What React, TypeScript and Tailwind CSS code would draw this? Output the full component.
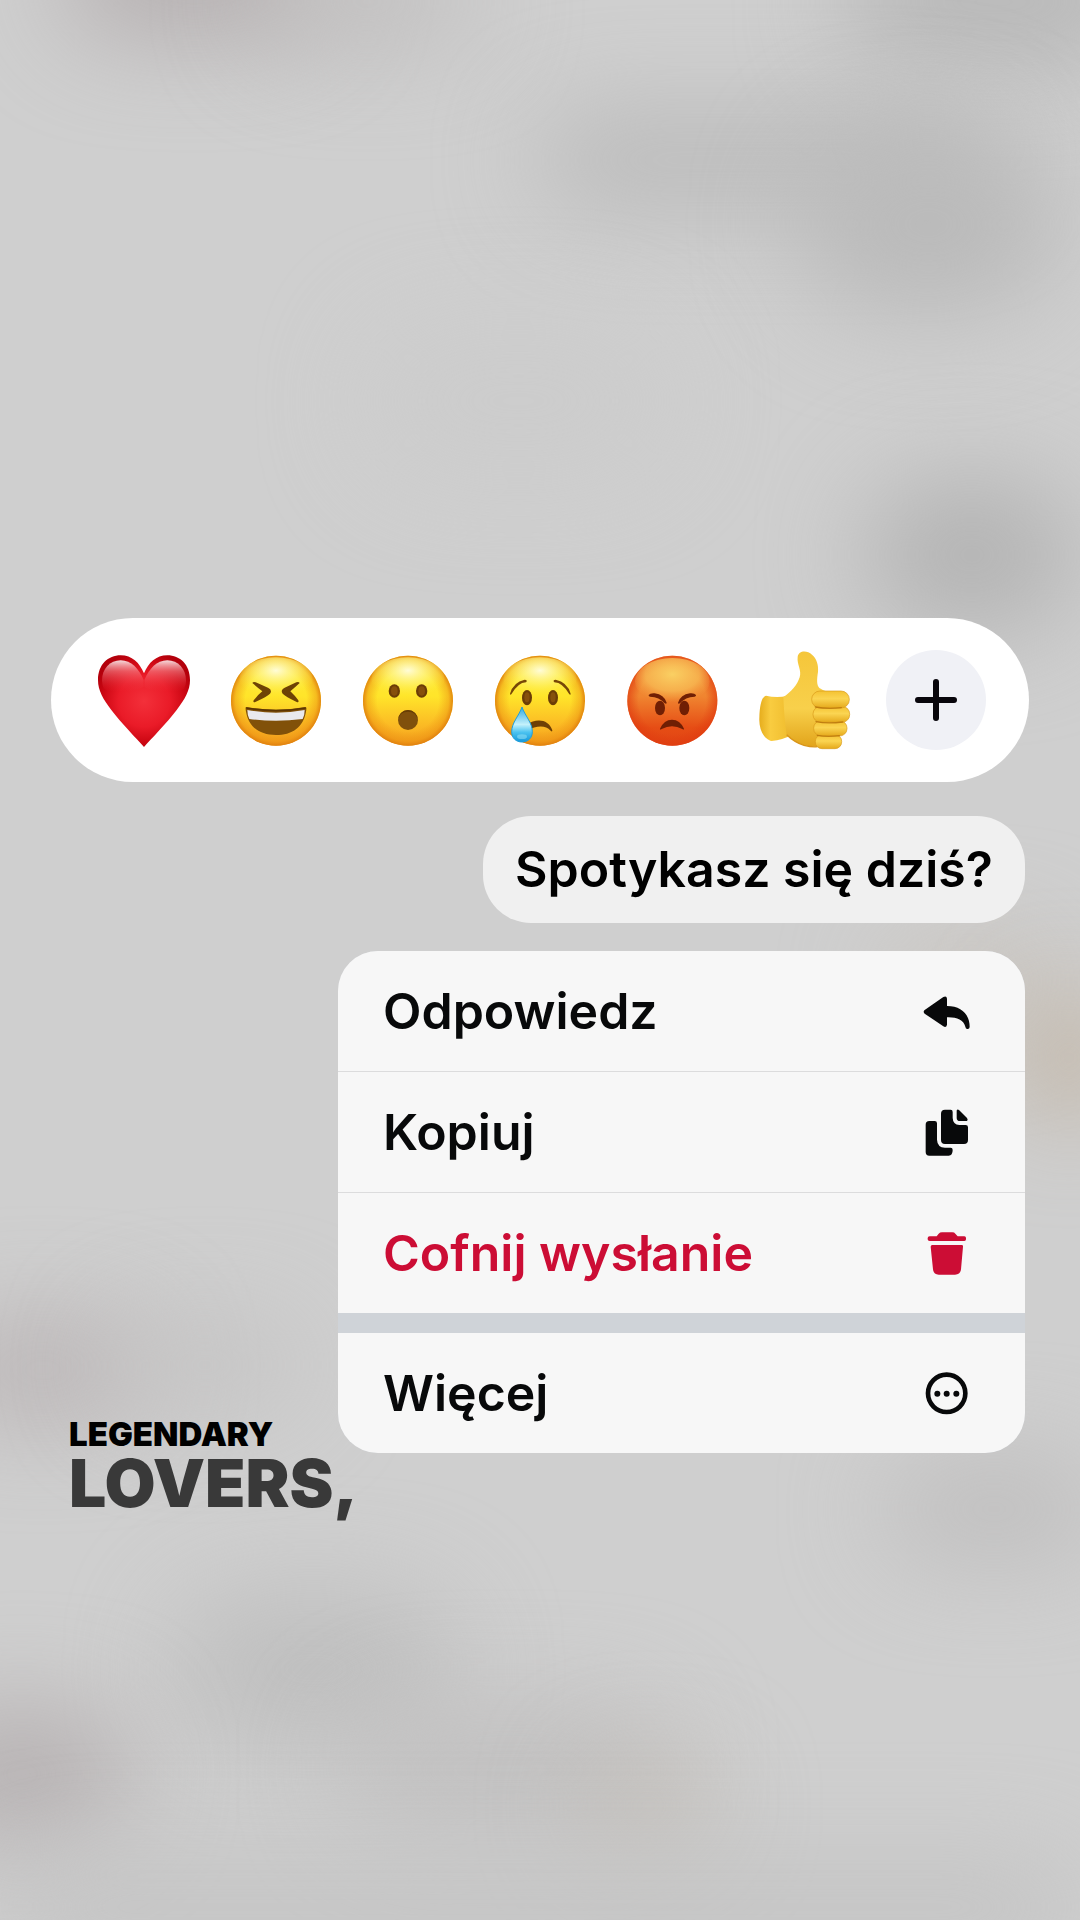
import { ReactNode } from 'react'

const BLOBS = [
  'left-[6%] -top-[4%] h-[110px] w-[24%] bg-[#b3adae]',
  'left-[24%] -top-[2%] h-[80px] w-[20%] bg-[#c0bebe]',
  '-right-[6%] -top-[3%] h-[120px] w-[28%] bg-[#b6b6b6]',
  'left-[50%] top-[6%] h-[90px] w-[42%] bg-[#b9b9b9]',
  'left-[74%] top-[7%] h-[180px] w-[24%] bg-[#bababa]',
  'left-[34%] top-[17%] h-[150px] w-[28%] bg-[#cccccc]',
  'left-[80%] top-[25%] h-[150px] w-[20%] bg-[#b3b3b3]',
  'left-[82%] top-[49%] h-[80px] w-[16%] bg-[#c9c4be]',
  'left-[95%] top-[52%] h-[120px] w-[8%] bg-[#bfb09d]',
  '-left-[6%] top-[69%] h-[90px] w-[20%] bg-[#b9b3b4]',
  'left-[10%] top-[69%] h-[80px] w-[18%] bg-[#c4c3c3]',
  'left-[82%] top-[76%] h-[100px] w-[20%] bg-[#bfbebe]',
  'left-[16%] top-[83%] h-[150px] w-[26%] bg-[#bfbfbf]',
  'left-[32%] top-[89%] h-[120px] w-[30%] bg-[#c1c0c0]',
  '-left-[8%] top-[89%] h-[130px] w-[20%] bg-[#b6b1b2]',
  'left-[54%] top-[92%] h-[80px] w-[12%] bg-[#c3beb8]',
  'left-0 top-[97%] h-[90px] w-full bg-[#c3c3c3]',
]

function Backdrop() {
  return (
    <div className="absolute inset-0 overflow-hidden bg-[#cfcfcf]" aria-hidden="true">
      {BLOBS.map((blob) => (
        <div key={blob} className={`absolute rounded-full blur-[50px] ${blob}`} />
      ))}
    </div>
  )
}

function Face({ id, children }: { id: string; children: ReactNode }) {
  return (
    <svg viewBox="0 0 300 300" className="size-full">
      <defs>
        <linearGradient id={`${id}-base`} x1="0" y1="0" x2="0" y2="1">
          <stop offset="0" stopColor="#fde53c" />
          <stop offset="0.45" stopColor="#ffe52a" />
          <stop offset="0.78" stopColor="#fbb924" />
          <stop offset="1" stopColor="#f3a01d" />
        </linearGradient>
        <radialGradient id={`${id}-edge`} cx="0.5" cy="0.5" r="0.5">
          <stop offset="0.68" stopColor="#ea8a10" stopOpacity="0" />
          <stop offset="0.9" stopColor="#ea8a10" stopOpacity="0.45" />
          <stop offset="1" stopColor="#de7d0d" stopOpacity="0.9" />
        </radialGradient>
        <radialGradient id={`${id}-shine`} cx="0.5" cy="0.3" r="0.6">
          <stop offset="0" stopColor="#fffde0" stopOpacity="0.95" />
          <stop offset="0.5" stopColor="#fff98a" stopOpacity="0.55" />
          <stop offset="1" stopColor="#fff23c" stopOpacity="0" />
        </radialGradient>
      </defs>
      <circle cx="150" cy="152" r="135" fill={`url(#${id}-base)`} />
      <circle cx="150" cy="152" r="135" fill={`url(#${id}-edge)`} />
      <ellipse cx="150" cy="88" rx="110" ry="66" fill={`url(#${id}-shine)`} />
      {children}
    </svg>
  )
}

function Heart() {
  return (
    <svg viewBox="0 0 300 300" className="size-full">
      <defs>
        <radialGradient id="heart-fill" cx="0.5" cy="0.5" r="0.56">
          <stop offset="0" stopColor="#f3303a" />
          <stop offset="0.5" stopColor="#ea1b28" />
          <stop offset="0.8" stopColor="#cc0713" />
          <stop offset="1" stopColor="#b3000b" />
        </radialGradient>
        <linearGradient id="heart-shine" x1="0" y1="0" x2="0" y2="1">
          <stop offset="0" stopColor="#fff" stopOpacity="0.85" />
          <stop offset="0.35" stopColor="#ff9ea3" stopOpacity="0.5" />
          <stop offset="1" stopColor="#f0303a" stopOpacity="0" />
        </linearGradient>
      </defs>
      <path
        d="M150 291C128 266 82 220 52 180C28 148 12 122 12 90C12 44 42 16 80 16C114 16 136 38 150 70C164 38 186 16 220 16C258 16 288 44 288 90C288 122 272 148 248 180C218 220 172 266 150 291Z"
        fill="url(#heart-fill)"
      />
      <path
        d="M24 92C24 56 48 31 80 31C112 31 134 56 149 90L149 110C120 130 48 130 30 116Q24 104 24 92Z"
        fill="url(#heart-shine)"
      />
      <path
        d="M276 92C276 56 252 31 220 31C188 31 166 56 151 90L151 110C180 130 252 130 270 116Q276 104 276 92Z"
        fill="url(#heart-shine)"
      />
    </svg>
  )
}

function Laugh() {
  return (
    <Face id="laugh">
      <path d="M79 99Q82 94 89 97L126 113Q140 120 132 131Q124 139 88 156Q80 159 83 151Q94 136 109 124Q94 112 79 99Z" fill="#6e4305" />
      <path d="M221 99Q218 94 211 97L176 113Q162 120 170 131Q178 139 212 156Q220 159 217 151Q206 136 193 124Q207 112 221 99Z" fill="#6e4305" />
      <path d="M61 171Q150 187 239 171Q243 171 240 185C232 232 198 255 150 255C102 255 68 232 60 185Q57 170 61 171Z" fill="#815109" />
      <path d="M64 180Q150 196 236 180Q236 196 230 207Q150 218 70 207Q64 196 64 180Z" fill="#e9e9ed" />
      <path d="M61 174Q150 190 239 174" fill="none" stroke="#5c3503" strokeWidth="5" />
    </Face>
  )
}

function Wow() {
  return (
    <Face id="wow">
      <ellipse cx="109" cy="123" rx="17" ry="20" fill="#6b3d06" />
      <ellipse cx="109" cy="123" rx="10" ry="14" fill="#86500c" />
      <ellipse cx="191" cy="123" rx="17" ry="20" fill="#6b3d06" />
      <ellipse cx="191" cy="123" rx="10" ry="14" fill="#86500c" />
      <circle cx="150" cy="210" r="30" fill="#80500c" />
      <path d="M120 210A30 30 0 0 1 180 210Q175 185 150 185Q125 185 120 210Z" fill="#663d05" />
    </Face>
  )
}

function Cry() {
  return (
    <Face id="cry">
      <defs>
        <linearGradient id="tear" x1="0" y1="0" x2="0" y2="1">
          <stop offset="0" stopColor="#2fa9e2" />
          <stop offset="0.5" stopColor="#c4f1fb" />
          <stop offset="0.72" stopColor="#4cc3f0" />
          <stop offset="1" stopColor="#1397da" />
        </linearGradient>
      </defs>
      <path d="M60 131Q70 96 104 89Q114 90 108 97Q84 98 64 133Q60 136 60 131Z" fill="#774707" />
      <path d="M242 131Q232 96 197 89Q187 90 193 97Q218 98 238 133Q242 136 242 131Z" fill="#774707" />
      <ellipse cx="111" cy="143" rx="15" ry="23" fill="#6b3d06" />
      <ellipse cx="111" cy="142" rx="8" ry="15" fill="#86500c" />
      <ellipse cx="189" cy="143" rx="15" ry="23" fill="#6b3d06" />
      <ellipse cx="189" cy="142" rx="8" ry="15" fill="#86500c" />
      <path d="M110 224C140 204 176 208 187 241Q187 247 182 242C166 224 140 226 110 242Z" fill="#6e3f05" />
      <path d="M96 171C104 196 127 218 127 245C127 264 114 276 96 276C78 276 65 264 65 245C65 218 88 196 96 171Z" fill="url(#tear)" stroke="#1f9edb" strokeWidth="3" />
      <ellipse cx="96" cy="260" rx="15" ry="7" fill="#9be5f8" opacity="0.5" />
    </Face>
  )
}

function Angry() {
  return (
    <svg viewBox="0 0 300 300" className="size-full">
      <defs>
        <linearGradient id="angry-base" x1="0" y1="0" x2="0" y2="1">
          <stop offset="0" stopColor="#f28a35" />
          <stop offset="0.45" stopColor="#f08530" />
          <stop offset="0.8" stopColor="#e64d15" />
          <stop offset="1" stopColor="#e04313" />
        </linearGradient>
        <radialGradient id="angry-edge" cx="0.5" cy="0.5" r="0.5">
          <stop offset="0.75" stopColor="#e03c10" stopOpacity="0" />
          <stop offset="1" stopColor="#e03c10" stopOpacity="0.7" />
        </radialGradient>
        <radialGradient id="angry-shine" cx="0.5" cy="0.35" r="0.6">
          <stop offset="0" stopColor="#fad063" />
          <stop offset="0.6" stopColor="#f8bd55" stopOpacity="0.75" />
          <stop offset="1" stopColor="#f6a444" stopOpacity="0" />
        </radialGradient>
      </defs>
      <circle cx="151" cy="152" r="135" fill="url(#angry-base)" />
      <circle cx="151" cy="152" r="135" fill="url(#angry-edge)" />
      <ellipse cx="151" cy="94" rx="112" ry="70" fill="url(#angry-shine)" />
      <ellipse cx="114" cy="174" rx="15" ry="22" fill="#701f04" />
      <ellipse cx="187" cy="174" rx="15" ry="22" fill="#701f04" />
      <path d="M80 135Q84 129 98 130Q126 134 134 158Q134 163 128 160Q112 141 84 140Q79 139 80 135Z" fill="#701f04" />
      <path d="M222 135Q218 129 204 130Q176 134 168 158Q168 163 174 160Q190 141 218 140Q223 139 222 135Z" fill="#701f04" />
      <path d="M114 236Q126 209 150 209Q174 209 186 236Q186 241 181 237Q150 220 119 237Q113 241 114 236Z" fill="#701f04" />
    </svg>
  )
}

function ThumbsUp() {
  return (
    <svg viewBox="0 0 300 300" className="size-full">
      <defs>
        <linearGradient id="thumb-hand" x1="0" y1="0" x2="0" y2="1">
          <stop offset="0" stopColor="#f5c63a" />
          <stop offset="0.6" stopColor="#f8d04b" />
          <stop offset="1" stopColor="#e2a41b" />
        </linearGradient>
        <linearGradient id="thumb-finger" x1="0" y1="0" x2="0" y2="1">
          <stop offset="0" stopColor="#f4c232" />
          <stop offset="0.45" stopColor="#fbd552" />
          <stop offset="1" stopColor="#e5a91c" />
        </linearGradient>
        <linearGradient id="thumb-wrist" x1="0" y1="0" x2="1" y2="0">
          <stop offset="0" stopColor="#e6ad1d" />
          <stop offset="0.35" stopColor="#f9cc40" />
          <stop offset="1" stopColor="#efbb2c" />
        </linearGradient>
      </defs>
      <path d="M36 137Q66 144 100 138L112 256Q86 270 53 273C34 270 14 244 16 204C17 166 23 140 36 137Z" fill="url(#thumb-wrist)" />
      <path
        d="M88 141C110 128 130 105 137 82C144 60 128 44 131 20C134 0 160 0 174 14C188 26 194 44 192 66C188 90 188 106 196 114Q208 122 222 126L220 278C206 292 176 293 150 286C126 278 110 266 98 254C92 220 90 180 88 141Z"
        fill="url(#thumb-hand)"
      />
      <path d="M98 254C110 266 126 278 150 286Q174 292 190 290" fill="none" stroke="#d8951a" strokeWidth="4" />
      <g fill="url(#thumb-finger)" stroke="#d99a19" strokeWidth="2">
        <rect x="184" y="254" width="79" height="42" rx="20" />
        <rect x="179" y="212" width="100" height="46" rx="22" />
        <rect x="177" y="169" width="110" height="48" rx="23" />
        <rect x="173" y="123" width="113" height="51" rx="25" />
      </g>
      <g fill="none" stroke="#b8740c" strokeWidth="4" strokeLinecap="round" opacity="0.8">
        <path d="M184 171Q220 178 262 173" />
        <path d="M186 215Q220 222 266 216" />
        <path d="M190 256Q220 262 256 257" />
      </g>
    </svg>
  )
}

function PlusIcon() {
  return (
    <svg viewBox="0 0 42 42" className="size-[42px]" stroke="#08060b" strokeWidth="6" strokeLinecap="round">
      <path d="M21 3V39M3 21H39" />
    </svg>
  )
}

function ReplyIcon() {
  return (
    <svg viewBox="0 0 144 144" className="size-12" fill="currentColor">
      <path d="M8 69L64 30Q74 25 75 35V57C118 57 143 82 143 120Q142 127 136 126Q131 126 130 119C124 98 104 90 75 91V113Q73 123 64 118L8 80Q2 74 8 69Z" />
    </svg>
  )
}

function CopyIcon() {
  return (
    <svg viewBox="0 0 144 144" className="size-12" fill="currentColor">
      <path d="M69 5H86Q92 5 92 12V30Q93 50 112 51H131Q138 51 138 58V96Q138 108 126 108H69Q57 108 57 96V17Q57 5 69 5Z" />
      <path d="M104 8Q106 2 111 6L135 30Q139 36 135 39H114Q104 39 104 29Z" />
      <path d="M22 39H38Q45 39 45 46V95Q46 118 69 119H86Q92 119 92 126Q92 143 80 143H22Q11 143 11 132V50Q11 39 22 39Z" />
    </svg>
  )
}

function TrashIcon() {
  return (
    <svg viewBox="0 0 144 144" className="size-12" fill="currentColor">
      <path d="M23 22H44L50 14Q54 10 60 10H91Q97 10 100 14L107 22H127Q132 22 132 27V31Q132 36 127 36H23Q17 36 17 31V27Q17 22 23 22Z" />
      <path d="M31 48H119Q124 48 123 53L117 121Q115 137 99 137H50Q35 137 33 121L26 53Q26 48 31 48Z" />
    </svg>
  )
}

function MoreIcon() {
  return (
    <svg viewBox="0 0 144 144" className="size-12" fill="currentColor">
      <circle cx="74" cy="73" r="56" fill="none" stroke="currentColor" strokeWidth="14" />
      <circle cx="46" cy="74" r="9" />
      <circle cx="74" cy="74" r="9" />
      <circle cx="103" cy="74" r="9" />
    </svg>
  )
}

const REACTIONS = [
  { label: 'Serce', icon: <Heart /> },
  { label: 'Śmiech', icon: <Laugh /> },
  { label: 'Zaskoczenie', icon: <Wow /> },
  { label: 'Smutek', icon: <Cry /> },
  { label: 'Złość', icon: <Angry /> },
  { label: 'Kciuk w górę', icon: <ThumbsUp /> },
]

function MenuItem({ label, icon, danger }: { label: string; icon: ReactNode; danger?: boolean }) {
  return (
    <button
      type="button"
      className={`flex h-[120px] w-full items-center justify-between bg-[#f7f7f7] pr-[55px] pl-[45px] text-left text-[50px] leading-[59px] font-semibold ${
        danger ? 'text-[#cc0d35]' : 'text-[#08090a]'
      }`}
    >
      <span>{label}</span>
      {icon}
    </button>
  )
}

export default function App() {
  return (
    <main className="relative min-h-screen font-['Inter','Liberation_Sans',sans-serif]">
      <Backdrop />

      <div className="relative flex flex-col pt-[618px]">
        <section className="mx-[51px] flex h-[164px] items-center justify-between rounded-full bg-white px-[43px]">
          {REACTIONS.map(({ label, icon }) => (
            <button key={label} type="button" aria-label={label} className="size-[100px]">
              {icon}
            </button>
          ))}
          <button
            type="button"
            aria-label="Więcej reakcji"
            className="flex size-[100px] items-center justify-center rounded-full bg-[#f0f1f6]"
          >
            <PlusIcon />
          </button>
        </section>

        <p className="mt-[34px] mr-[55px] self-end rounded-[48px] bg-[#f0f0f0] px-8 py-6 text-[50px] leading-[59px] font-semibold text-black">
          Spotykasz się dziś?
        </p>

        <nav className="mt-7 mr-[55px] w-[687px] self-end overflow-hidden rounded-[40px] bg-[#cfd3d8]">
          <div className="flex flex-col gap-px bg-[#dcdcdd]">
            <MenuItem label="Odpowiedz" icon={<ReplyIcon />} />
            <MenuItem label="Kopiuj" icon={<CopyIcon />} />
            <MenuItem label="Cofnij wysłanie" icon={<TrashIcon />} danger />
          </div>
          <div className="pt-5">
            <MenuItem label="Więcej" icon={<MoreIcon />} />
          </div>
        </nav>

        <div className="-mt-9 ml-[69px] self-start">
          <p className="text-[33px] leading-[34px] font-black text-black">LEGENDARY</p>
          <p className="text-[66px] leading-[64px] font-black text-[#393939]">LOVERS,</p>
        </div>
      </div>
    </main>
  )
}
